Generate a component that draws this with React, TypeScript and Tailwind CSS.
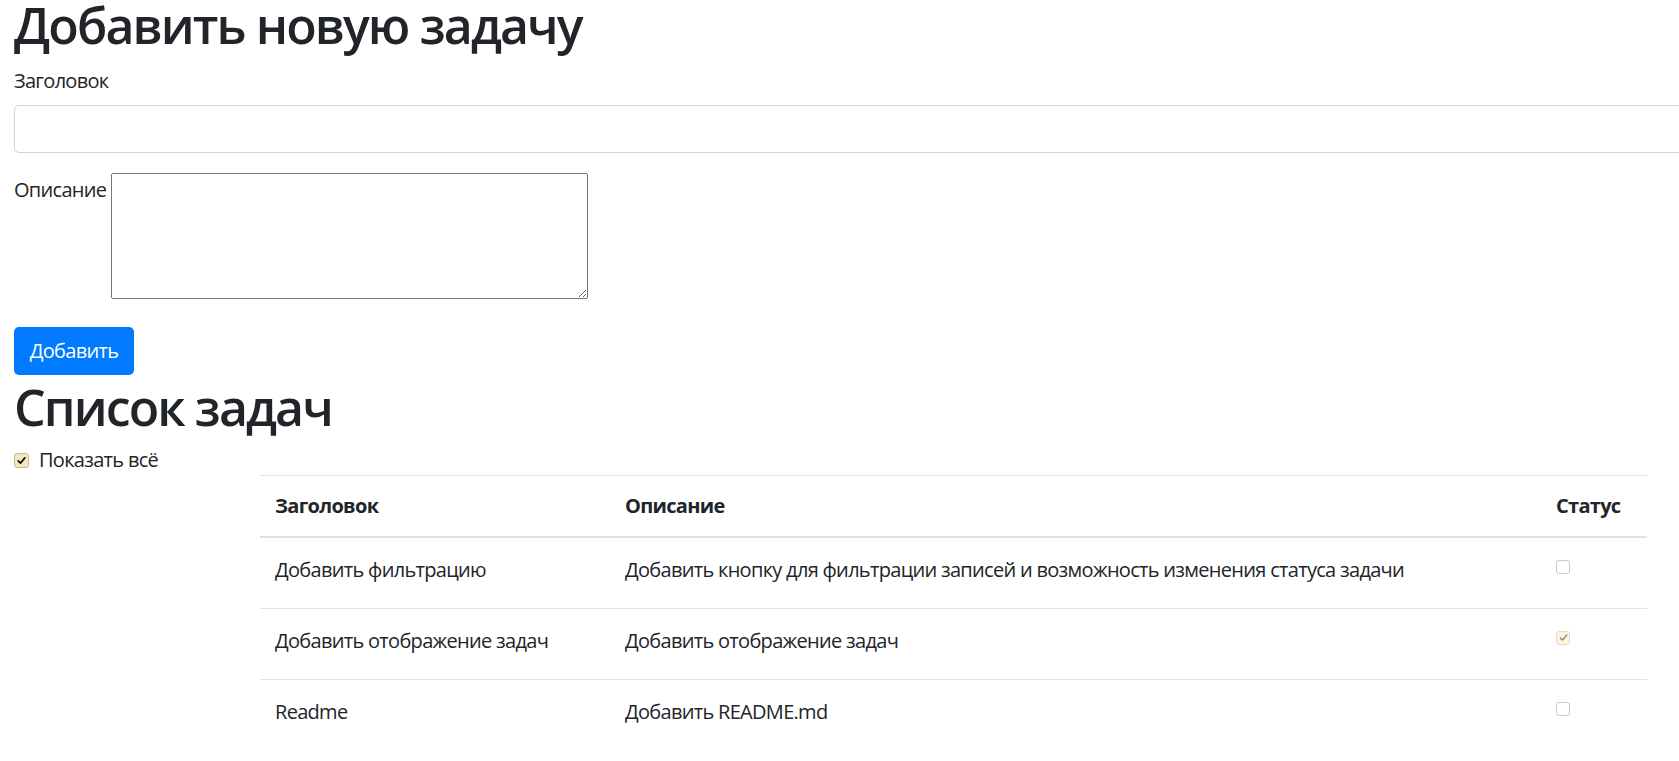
import { useState } from "react";

type Task = {
  title: string;
  description: string;
  done: boolean;
};

const tasks: Task[] = [
  {
    title: "Добавить фильтрацию",
    description:
      "Добавить кнопку для фильтрации записей и возможность изменения статуса задачи",
    done: false,
  },
  {
    title: "Добавить отображение задач",
    description: "Добавить отображение задач",
    done: true,
  },
  { title: "Readme", description: "Добавить README.md", done: false },
];

function Check({ checked, dim }: { checked: boolean; dim?: boolean }) {
  return (
    <span
      className={
        "flex items-center justify-center rounded-[3px] border " +
        (dim ? "h-[14px] w-[14px] " : "h-[15px] w-[15px] ") +
        (checked
          ? dim
            ? "border-[#e6dcc2] bg-[#fbf3dc]"
            : "border-[#c9b98f] bg-[#f3e6c3]"
          : "border-[#c8c8c8] bg-white")
      }
    >
      {checked && (
        <svg viewBox="0 0 12 12" className="h-[11px] w-[11px]">
          <path
            d="M2.4 6.4 L4.9 8.8 L9.6 3.2"
            fill="none"
            stroke={dim ? "#7c7c7c" : "#111"}
            strokeWidth={dim ? 1.4 : 1.9}
            strokeLinecap="round"
            strokeLinejoin="round"
          />
        </svg>
      )}
    </span>
  );
}

export default function App() {
  const [title, setTitle] = useState("");
  const [desc, setDesc] = useState("");

  return (
    <div
      className="min-h-screen w-full overflow-x-hidden bg-white pl-[14px] text-[20px] leading-[30px] tracking-[-0.7px] text-[#212529]"
      style={{ fontFamily: '"Open Sans", "Noto Sans", sans-serif' }}
    >
      <h1 className="mb-[16px] text-[50px] font-semibold leading-[50px] tracking-[-1.9px]">
        Добавить новую задачу
      </h1>

      <div className="mb-[20px]">
        <label className="mb-[9px] block">Заголовок</label>
        <input
          value={title}
          onChange={(e) => setTitle(e.target.value)}
          className="block h-[48px] w-[1720px] rounded-[5px] border border-[#ced4da] bg-white px-[15px] outline-none"
        />
      </div>

      <div className="flex items-start gap-[6px]">
        <label className="w-[91px] shrink-0 pt-[2px]">Описание</label>
        <textarea
          value={desc}
          onChange={(e) => setDesc(e.target.value)}
          className="h-[126px] w-[477px] rounded-[2px] border border-[#767676] outline-none"
        />
      </div>

      <button className="mt-[28px] block h-[48px] w-[120px] rounded-[5px] bg-[#007bff] text-white">
        Добавить
      </button>

      <h2 className="mt-[2px] mb-[8px] text-[50px] font-semibold leading-[60px] tracking-[-1.9px]">
        Список задач
      </h2>

      <div className="flex items-start">
        <label className="flex h-[30px] w-[246px] shrink-0 items-center gap-[10px]">
          <Check checked />
          <span>Показать всё</span>
        </label>

        <table className="mt-[30px] w-[1387px] table-fixed border-collapse">
          <thead>
            <tr>
              <th className="w-[350px] border-t border-b-2 border-[#dee2e6] px-[15px] py-[15px] text-left font-bold">
                Заголовок
              </th>
              <th className="w-[931px] border-t border-b-2 border-[#dee2e6] px-[15px] py-[15px] text-left font-bold">
                Описание
              </th>
              <th className="w-[106px] border-t border-b-2 border-[#dee2e6] px-[15px] py-[15px] text-left font-bold">
                Статус
              </th>
            </tr>
          </thead>
          <tbody>
            {tasks.map((t, i) => (
              <tr
                key={t.title}
                className={"h-[71px] " + (i > 0 ? "border-t border-[#dee2e6]" : "")}
              >
                <td className="px-[15px] pt-[17px] align-top">{t.title}</td>
                <td className="px-[15px] pt-[17px] align-top">{t.description}</td>
                <td className="px-[15px] pt-[22px] align-top">
                  <Check checked={t.done} dim />
                </td>
              </tr>
            ))}
          </tbody>
        </table>
      </div>
    </div>
  );
}
